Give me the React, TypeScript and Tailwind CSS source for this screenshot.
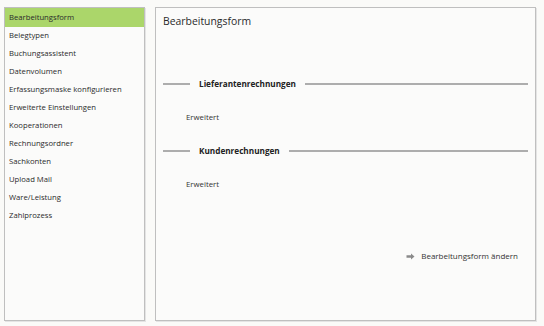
import React from "react";

const items = [
  "Bearbeitungsform",
  "Belegtypen",
  "Buchungsassistent",
  "Datenvolumen",
  "Erfassungsmaske konfigurieren",
  "Erweiterte Einstellungen",
  "Kooperationen",
  "Rechnungsordner",
  "Sachkonten",
  "Upload Mail",
  "Ware/Leistung",
  "Zahlprozess",
];

function Section({ title }: { title: string }) {
  return (
    <div className="flex items-center h-[14px]">
      <div className="w-[27px] h-[2px] bg-[#adadad]" />
      <div className="mx-[9px] text-[8.2px] font-bold text-[#222] leading-[14px] whitespace-nowrap">{title}</div>
      <div className="flex-1 h-[2px] bg-[#adadad]" />
    </div>
  );
}

export default function App() {
  return (
    <div
      className="w-[544px] h-[326px] bg-[#fafaf8] flex gap-[10px] pt-[7px] pl-[4px] pr-[8px] pb-[5px] text-[#333]"
      style={{ fontFamily: '"Open Sans", "Noto Sans", sans-serif' }}
    >
      <div className="w-[141px] border border-[#bfbfbf] shadow-[1px_1px_0_#e4e4e4] bg-[#fbfbfa] flex flex-col">
        {items.map((it, i) => (
          <div
            key={it}
            className={
              i === 0
                ? "h-[19px] flex items-center pl-[4px] bg-[#abd66a] text-[7.7px] text-[#2a2a2a] whitespace-nowrap"
                : "h-[18px] flex items-center pl-[4px] text-[7.7px] text-[#2a2a2a] whitespace-nowrap"
            }
          >
            {it}
          </div>
        ))}
      </div>
      <div className="flex-1 border border-[#bfbfbf] shadow-[1px_1px_0_#e4e4e4] bg-[#fbfbfa] flex flex-col pl-[7px] pr-[7px]">
        <div className="h-[27px] flex items-center text-[10.4px] text-[#2a2a2a]">Bearbeitungsform</div>
        <div className="mt-[41.5px]">
          <Section title="Lieferantenrechnungen" />
        </div>
        <div className="mt-[20.5px] h-[14px] flex items-center ml-[23px] text-[7.8px] text-[#333]">Erweitert</div>
        <div className="mt-[19px]">
          <Section title="Kundenrechnungen" />
        </div>
        <div className="mt-[20px] h-[14px] flex items-center ml-[23px] text-[7.8px] text-[#333]">Erweitert</div>
        <div className="mt-[57px] h-[14px] flex items-center justify-end pr-[10px] gap-[6px] text-[8px] text-[#333]">
          <svg width="9" height="7" viewBox="0 0 9 7">
            <path d="M0.5 2.3 H5 V0.6 L8.5 3.5 L5 6.4 V4.7 H0.5 Z" fill="#8a8a8a" />
          </svg>
          <span>Bearbeitungsform ändern</span>
        </div>
      </div>
    </div>
  );
}
